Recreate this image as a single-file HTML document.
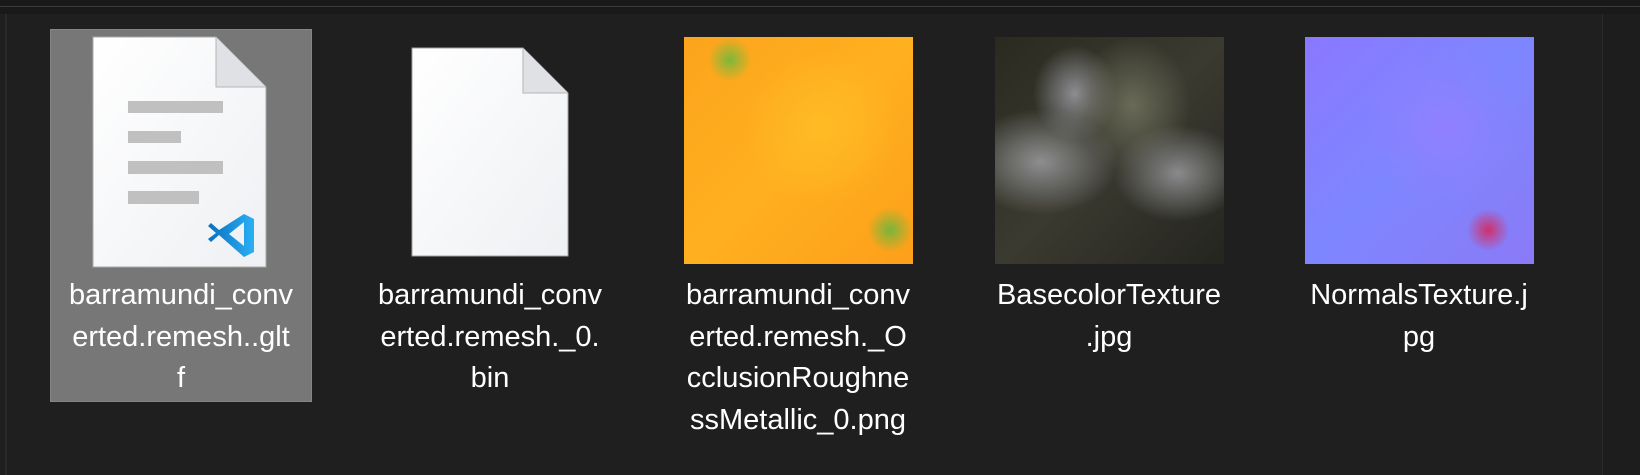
<!DOCTYPE html>
<html><head><meta charset="utf-8"><style>
html,body{margin:0;padding:0;width:1640px;height:475px;overflow:hidden;background:#1f1f1f;}
.top{position:absolute;left:0;top:0;width:1640px;height:14px;background:#191919;}
.topline{position:absolute;left:0;top:6px;width:1640px;height:1px;background:#3c3c3c;}
.leftl{position:absolute;left:5px;top:14px;width:2px;height:461px;background:#2a2a2a;}
.right{position:absolute;left:1602px;top:14px;width:38px;height:461px;background:#1d1d1d;border-left:1px solid #2b2b2b;}
.sel{position:absolute;left:50px;top:29px;width:260px;height:371px;background:#777;border:1px solid #858585;}
.lbl{position:absolute;width:300px;text-align:center;color:#fff;font-family:"Liberation Sans",sans-serif;font-size:29px;line-height:41.5px;top:275px;letter-spacing:0px;}
.tex{position:absolute;top:37px;width:229px;height:227px;}
</style></head><body>
<div class="top"></div><div class="topline"></div><div class="leftl"></div><div class="right"></div>
<div class="sel"></div>
<svg style="position:absolute;left:0;top:0" width="1640" height="475">
<defs><linearGradient id="pg" x1="0" y1="0" x2="1" y2="1"><stop offset="0" stop-color="#ffffff"/><stop offset="1" stop-color="#eef0f3"/></linearGradient>
<linearGradient id="vs" x1="0" y1="0" x2="1" y2="0"><stop offset="0" stop-color="#0a6fc0"/><stop offset="1" stop-color="#2ab0f5"/></linearGradient></defs>
<path d="M93 37H216L266 87V267H93Z" fill="url(#pg)" stroke="#a9a9a9" stroke-width="1"/>
<path d="M216 37V87H266" fill="#dfe1e4" stroke="#b5b5b5"/>
<rect x="128" y="101" width="95" height="12" fill="#c0c0c0"/>
<rect x="128" y="131" width="53" height="12" fill="#c0c0c0"/>
<rect x="128" y="161" width="95" height="13" fill="#c0c0c0"/>
<rect x="128" y="191" width="71" height="13" fill="#c0c0c0"/>
<path d="M244 214L254 219V252L244 257L219 235L211 242L208 239L216 233L208 226L211 223L219 230Z M244 222L229 234L244 246Z" fill="url(#vs)" fill-rule="evenodd"/>
<path d="M412 48H523L568 93V256H412Z" fill="url(#pg)" stroke="#a0a0a0"/>
<path d="M523 48V93H568" fill="#dfe1e4" stroke="#b5b5b5"/>
</svg>
<div class="tex" style="left:684px;background:radial-gradient(circle at 20% 10%,#7cb83a 0,transparent 8%),radial-gradient(circle at 90% 85%,#78b53a 0,transparent 8%),radial-gradient(circle at 60% 40%,#ffbb25 0,transparent 40%),linear-gradient(135deg,#fca41c,#ffb020 50%,#fd9f1a);"></div>
<div class="tex" style="left:995px;background:radial-gradient(ellipse at 20% 55%,#8e8e90 0,transparent 30%),radial-gradient(ellipse at 80% 60%,#8a8a8c 0,transparent 25%),radial-gradient(ellipse at 60% 30%,#6a6a58 0,transparent 30%),radial-gradient(ellipse at 35% 25%,#8d8d92 0,transparent 20%),linear-gradient(135deg,#2a2a20,#3a3a30 50%,#252520);"></div>
<div class="tex" style="left:1305px;background:radial-gradient(circle at 80% 85%,#d0306a 0,transparent 8%),radial-gradient(circle at 60% 40%,#9080ff 0,transparent 40%),linear-gradient(135deg,#8a78ff,#7e86ff 50%,#8a7af6);"></div>
<div class="lbl" style="left:31px">barramundi_conv<br>erted.remesh..glt<br>f</div>
<div class="lbl" style="left:340px">barramundi_conv<br>erted.remesh._0.<br>bin</div>
<div class="lbl" style="left:648px">barramundi_conv<br>erted.remesh._O<br>cclusionRoughne<br>ssMetallic_0.png</div>
<div class="lbl" style="left:959px">BasecolorTexture<br>.jpg</div>
<div class="lbl" style="left:1269px">NormalsTexture.j<br>pg</div>
</body></html>
